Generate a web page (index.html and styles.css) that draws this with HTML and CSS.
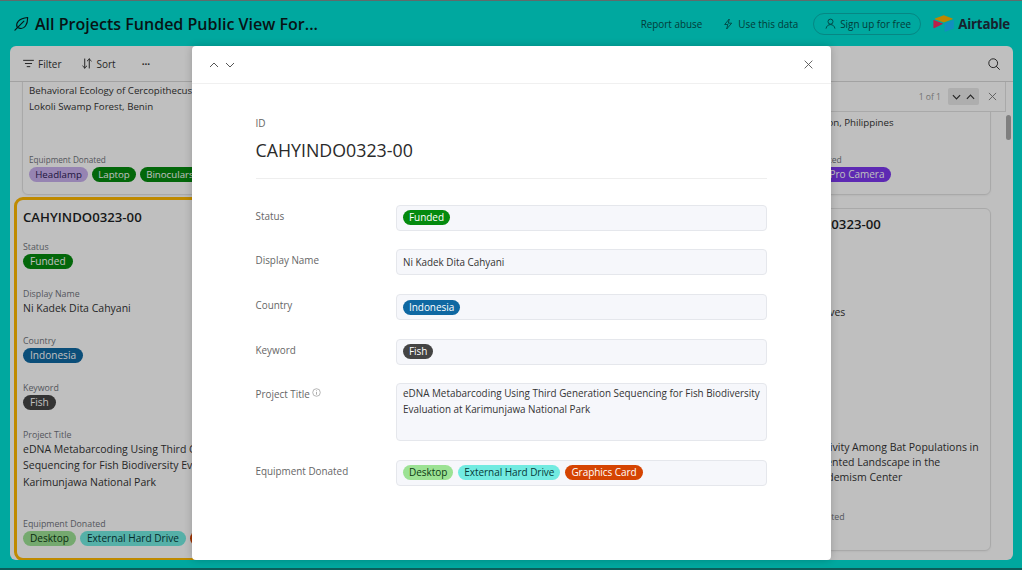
FILE: index.html
```html
<!DOCTYPE html>
<html lang="en">
<head>
<meta charset="utf-8">
<title>All Projects Funded Public View</title>
<link rel="stylesheet" href="styles.css">
</head>
<body>
<div class="app">
  <header class="topbar">
    <div class="brand">
      <svg class="leaf" viewBox="0 0 16 16" width="15" height="15"><path d="M3.2 11.6C1.8 7.4 4.8 2.6 14.6 1.6 14.6 9.6 11 14 6.4 13.2 5 13 3.8 12.4 3.2 11.6ZM1 15 10.6 5.4" fill="none" stroke="currentColor" stroke-width="1.2" stroke-linecap="round" stroke-linejoin="round"/></svg>
      <span class="brand-title">All Projects Funded Public View For...</span>
    </div>
    <nav class="top-actions">
      <span class="top-link">Report abuse</span>
      <span class="top-link use">
        <svg viewBox="0 0 12 14" width="10" height="12"><path d="M7.5 1 2 7.6h3.8L4.4 13l6-7H6.4Z" fill="none" stroke="currentColor" stroke-width="1" stroke-linejoin="round"/></svg>
        Use this data
      </span>
      <span class="signup">
        <svg viewBox="0 0 14 14" width="11" height="11"><circle cx="7" cy="4.6" r="3.2" fill="none" stroke="currentColor" stroke-width="1.1"/><path d="M1.4 13c.6-3 2.8-4.6 5.6-4.6s5 1.6 5.6 4.6" fill="none" stroke="currentColor" stroke-width="1.1" stroke-linecap="round"/></svg>
        Sign up for free
      </span>
      <span class="logo">
        <svg viewBox="0 0 22 18" width="21" height="17"><path d="M10.6.4 1.9 3.7c-.3.1-.3.5 0 .7l8.6 3.4c.5.2 1 .2 1.5 0l8.6-3.4c.3-.2.3-.6 0-.7L12 .4c-.5-.2-1-.2-1.4 0Z" fill="#fcb400"/><path d="M12.2 9.2v8.2c0 .3.3.5.6.4l8.9-3.5c.2-.1.3-.3.3-.4V5.6c0-.3-.3-.5-.6-.4l-8.9 3.6c-.2 0-.3.2-.3.4Z" fill="#18bfff"/><path d="M10.2 9.6 7.5 10.9 1 14c-.3.1-.7-.1-.7-.4V5.7c0-.1.1-.2.2-.3h.2l9.5 3.6c.4.1.4.5 0 .6Z" fill="#f82b60"/></svg>
        <span class="logo-word">Airtable</span>
      </span>
    </nav>
  </header>

  <main class="panel">
    <div class="toolbar">
      <span class="tool">
        <svg viewBox="0 0 12 10" width="11" height="9"><path d="M.5 1.5h11M2.5 5h7M4.5 8.5h3" stroke="currentColor" stroke-width="1.1" fill="none" stroke-linecap="round"/></svg>
        Filter
      </span>
      <span class="tool">
        <svg viewBox="0 0 11 12" width="10" height="11"><path d="M3 1v10M.8 8.8 3 11l2.2-2.2M8 11V1M5.8 3.2 8 1l2.2 2.2" stroke="currentColor" stroke-width="1.1" fill="none" stroke-linecap="round" stroke-linejoin="round"/></svg>
        Sort
      </span>
      <span class="tool more">···</span>
      <svg class="search" viewBox="0 0 12 12" width="12" height="12"><circle cx="5.2" cy="5.2" r="4.4" fill="none" stroke="currentColor" stroke-width="1"/><path d="m8.4 8.4 3 3" stroke="currentColor" stroke-width="1" stroke-linecap="round"/></svg>
    </div>

    <div class="viewport">
      <div class="grid">
        <div class="col">
          <article class="card card-top">
            <p class="value">Behavioral Ecology of Cercopithecus sclateri in the<br>Lokoli Swamp Forest, Benin</p>
            <p class="label">Equipment Donated</p>
            <div class="pills">
              <span class="pill purple">Headlamp</span><span class="pill green">Laptop</span><span class="pill green">Binoculars</span>
            </div>
          </article>
          <article class="card selected">
            <h2 class="card-title">CAHYINDO0323-00</h2>
            <p class="label">Status</p>
            <div class="pills"><span class="pill green">Funded</span></div>
            <p class="label">Display Name</p>
            <p class="value">Ni Kadek Dita Cahyani</p>
            <p class="label">Country</p>
            <div class="pills"><span class="pill blue">Indonesia</span></div>
            <p class="label">Keyword</p>
            <div class="pills"><span class="pill dark">Fish</span></div>
            <p class="label">Project Title</p>
            <p class="value">eDNA Metabarcoding Using Third Generation<br>Sequencing for Fish Biodiversity Evaluation at<br>Karimunjawa National Park</p>
            <p class="label equip">Equipment Donated</p>
            <div class="pills">
              <span class="pill lime">Desktop</span><span class="pill aqua">External Hard Drive</span><span class="pill orange">Graphics Card</span>
            </div>
          </article>
        </div>
        <div class="col"></div>
        <div class="col">
          <article class="card card-top right-top">
            <p class="value right-line">Reptiles of Luzon, Philippines</p>
            <p class="label">Equipment Donated</p>
            <div class="pills"><span class="pill green">Laptop</span><span class="pill violet">GoPro Camera</span></div>
          </article>
          <article class="card right-main">
            <h2 class="card-title">PRAYOGAZ0323-00</h2>
            <p class="value place">Bats in the Caves</p>
            <p class="value abstract">Moonlight Activity Among Bat Populations in<br>Highly Fragmented Landscape in the<br>the Samar Endemism Center</p>
            <p class="label equip">Equipment Donated</p>
          </article>
        </div>
      </div>
      <div class="findbar">
        <span class="find-count">1 of 1</span>
        <span class="find-arrows">
          <svg viewBox="0 0 10 6" width="9" height="6"><path d="m1 1 4 4 4-4" fill="none" stroke="currentColor" stroke-width="1.3"/></svg>
          <svg viewBox="0 0 10 6" width="9" height="6"><path d="m1 5 4-4 4 4" fill="none" stroke="currentColor" stroke-width="1.3"/></svg>
        </span>
        <svg class="find-close" viewBox="0 0 10 10" width="9" height="9"><path d="m1 1 8 8M9 1 1 9" stroke="currentColor" stroke-width="1"/></svg>
      </div>
      <div class="scrollthumb"></div>
    </div>
  </main>
</div>

<div class="overlay"></div>

<section class="modal">
  <div class="modal-head">
    <span class="nav-arrows">
      <svg viewBox="0 0 10 6" width="10" height="6"><path d="m1 5 4-4 4 4" fill="none" stroke="currentColor" stroke-width="1"/></svg>
      <svg viewBox="0 0 10 6" width="10" height="6"><path d="m1 1 4 4 4-4" fill="none" stroke="currentColor" stroke-width="1"/></svg>
    </span>
    <svg class="modal-close" viewBox="0 0 10 10" width="9" height="9"><path d="m.7.7 8.6 8.6M9.3.7.7 9.3" stroke="currentColor" stroke-width="1"/></svg>
  </div>
  <div class="modal-body">
    <div class="record-head">
      <p class="id-label">ID</p>
      <h1 class="record-id">CAHYINDO0323-00</h1>
    </div>
    <div class="fields">
      <div class="field-label">Status</div>
      <div class="field-box"><span class="pill m-green">Funded</span></div>
      <div class="field-label">Display Name</div>
      <div class="field-box">Ni Kadek Dita Cahyani</div>
      <div class="field-label">Country</div>
      <div class="field-box"><span class="pill m-blue">Indonesia</span></div>
      <div class="field-label">Keyword</div>
      <div class="field-box"><span class="pill m-dark">Fish</span></div>
      <div class="field-label">Project Title
        <svg class="info" viewBox="0 0 10 10" width="9" height="9"><circle cx="5" cy="5" r="4.2" fill="none" stroke="currentColor" stroke-width=".8"/><path d="M5 4.4v3M5 2.6v.9" stroke="currentColor" stroke-width=".9"/></svg>
      </div>
      <div class="field-box long">eDNA Metabarcoding Using Third Generation Sequencing for Fish Biodiversity Evaluation at Karimunjawa National Park</div>
      <div class="field-label">Equipment Donated</div>
      <div class="field-box pills-row"><span class="pill m-lime">Desktop</span><span class="pill m-aqua">External Hard Drive</span><span class="pill m-orange">Graphics Card</span></div>
    </div>
  </div>
</section>
</body>
</html>
```
FILE: styles.css
```css
* { box-sizing: border-box; }
html, body { margin: 0; height: 100%; overflow: hidden; }
body {
  position: relative;
  width: 1022px;
  height: 570px;
  font-family: "Open Sans", "Noto Sans", sans-serif;
  color: #1d1f25;
  background: #00e0d4;
}
p, h1, h2 { margin: 0; font-weight: 400; }

.app { display: flex; flex-direction: column; height: 570px; padding: 0 9px 8px 10px; border-top: 1px solid #7f8f8f; border-bottom: 2px solid #0f7d78; }

.topbar { display: flex; align-items: center; justify-content: space-between; height: 45px; flex: none; padding: 0 3px 0 4px; }
.brand { display: flex; align-items: center; gap: 6px; color: #0b1a1c; }
.leaf { flex: none; }
.brand-title { font-size: 16.05px; font-weight: 600; white-space: nowrap; }
.top-actions { display: flex; align-items: center; font-size: 9.9px; color: #04504e; }
.top-link { display: inline-flex; align-items: center; gap: 5px; }
.use { margin-left: 21px; }
.signup { display: inline-flex; align-items: center; gap: 4px; height: 22px; width: 108px; padding: 0 0 0 11px; margin-left: 15px; border: 1px solid #08b5b0; border-radius: 11px; white-space: nowrap; }
.logo { display: inline-flex; align-items: center; gap: 4px; margin-left: 12px; }
.logo-word { font-size: 13.3px; font-weight: 700; color: #1f2d3d; letter-spacing: -.2px; }

.panel { flex: 1; min-height: 0; display: flex; flex-direction: column; background: #fff; border-radius: 6px; overflow: hidden; }
.toolbar { display: flex; align-items: center; height: 36px; flex: none; padding: 0 13px; border-bottom: 1px solid #d8d8d8; font-size: 10px; color: #333; }
.tool { display: inline-flex; align-items: center; gap: 4px; }
.tool + .tool { margin-left: 21px; }
.tool.more { margin-left: 26px; font-weight: 700; }
.search { margin-left: auto; }

.viewport { position: relative; flex: 1; min-height: 0; overflow: hidden; }
.grid { display: grid; grid-template-columns: 240px 1fr 236px; column-gap: 14px; width: 981px; padding-left: 12px; margin-top: -30px; }
.col { display: flex; flex-direction: column; gap: 13px; min-width: 0; }

.card { background: #fff; border: 1px solid #e2e2e2; border-radius: 6px; padding: 0 6px; box-shadow: 0 1px 2px rgba(0,0,0,.05); }
.card-title { font-size: 13.2px; font-weight: 600; line-height: 20px; white-space: nowrap; }
.label { font-size: 8.8px; line-height: 12px; color: #70747c; margin-top: 18.8px; white-space: nowrap; }
.value { font-size: 10.5px; line-height: 16.5px; color: #333; white-space: nowrap; }
.pills { display: flex; gap: 4px; white-space: nowrap; margin-top: 1px; }

.card-top { height: 143px; padding-top: 30px; }
.card-top .value { font-size: 9.7px; line-height: 16px; height: 32px; }
.card-top .label { font-size: 8.2px; margin-top: 39px; }
.card-top .pills { margin-top: 1px; }
.card-top .pill { font-size: 9.7px; padding: 0 6.2px; }
.card-top .right-line { padding-top: 32px; line-height: 16px; }
.right-top .label { font-size: 8.5px; }
.card-top .violet { font-size: 10px; }

.selected { height: 364px; flex: none; width: 254px; margin: -11px 0 -60px -8px; padding: 7px 6px 0; border: 3px solid #ffb800; border-radius: 9px; box-shadow: none; }
.selected .card-title + .label { margin-top: 14px; }
.selected .equip { margin-top: 27.5px; }
.selected .equip + .pills { margin-top: 1.5px; }
.selected .pill { font-size: 10.1px; }

.right-main { height: 343px; padding-top: 5px; }
.place { margin-top: 70px; line-height: 16px; }
.abstract { margin-top: 120px; line-height: 15px; }
.right-main .equip { margin-top: 26px; }

.pill { display: inline-flex; align-items: center; height: 15px; padding: 0 7px; border-radius: 8px; font-size: 10.1px; line-height: 15px; flex: none; }
.purple { background: #c9b0ee; color: #2b1a55; }
.green, .m-green { background: #048a0e; color: #fff; }
.blue, .m-blue { background: #0f68a2; color: #fff; }
.dark, .m-dark { background: #444; color: #fff; }
.lime, .m-lime { background: #9ce294; color: #0c3a13; }
.aqua, .m-aqua { background: #72ebe1; color: #053a38; }
.orange, .m-orange { background: #d54402; color: #fff; }
.violet { background: #7c37ef; color: #fff; }

.findbar { position: absolute; top: 0; right: 7px; height: 30px; width: 180px; display: flex; align-items: center; justify-content: flex-end; padding-right: 8px; background: #fff; border-right: 1px solid #e2e2e2; border-bottom: 1px solid #e2e2e2; font-size: 8.6px; color: #999; }
.find-arrows { display: inline-flex; align-items: center; justify-content: center; gap: 5px; width: 31px; height: 17px; margin-left: 7px; background: #e8e8e8; border-radius: 2px; color: #333; }
.find-close { color: #777; margin-left: 9px; }
.scrollthumb { position: absolute; right: 2px; top: 33px; width: 5px; height: 25px; background: #aaa; border-radius: 3px; }

.overlay { position: absolute; inset: 0; background: rgba(0,0,0,.25); }

.modal { position: absolute; left: 192px; top: 46px; width: 639px; height: 514px; background: #fff; border-radius: 4px; display: flex; flex-direction: column; box-shadow: 0 0 8px rgba(0,0,0,.2); }
.modal-head { display: flex; align-items: center; justify-content: space-between; height: 38px; padding: 0 18px 0 17px; border-bottom: 1px solid #f0f0f0; flex: none; }
.nav-arrows { display: inline-flex; gap: 6px; align-items: center; color: #555; }
.modal-close { color: #555; }
.modal-body { padding: 32px 64px 0 63.5px; }
.record-head { padding-bottom: 16px; border-bottom: 1px solid #eee; }
.id-label { font-size: 10px; line-height: 14px; color: #666; }
.record-id { font-size: 17.8px; line-height: 24px; margin-top: 8px; color: #2a2a2a; }
.fields { display: grid; grid-template-columns: 140.5px 1fr; row-gap: 18.7px; margin-top: 25.7px; }
.field-label { font-size: 9.9px; line-height: 14px; color: #666; padding-top: 4px; }
.info { color: #999; margin-left: 0; vertical-align: 1px; }
.field-box { display: flex; align-items: center; height: 26px; padding: 0 6px; background: #f6f7fb; border: 1px solid #e5e7ec; border-radius: 4px; font-size: 9.9px; color: #333; }
.field-box .pill { font-size: 10px; letter-spacing: -.05px; padding: 0 6px; }
.field-box.long { display: block; height: 57.5px; padding: 2px 4px 2px 6px; line-height: 15.5px; }
.pills-row { gap: 5px; }
```
